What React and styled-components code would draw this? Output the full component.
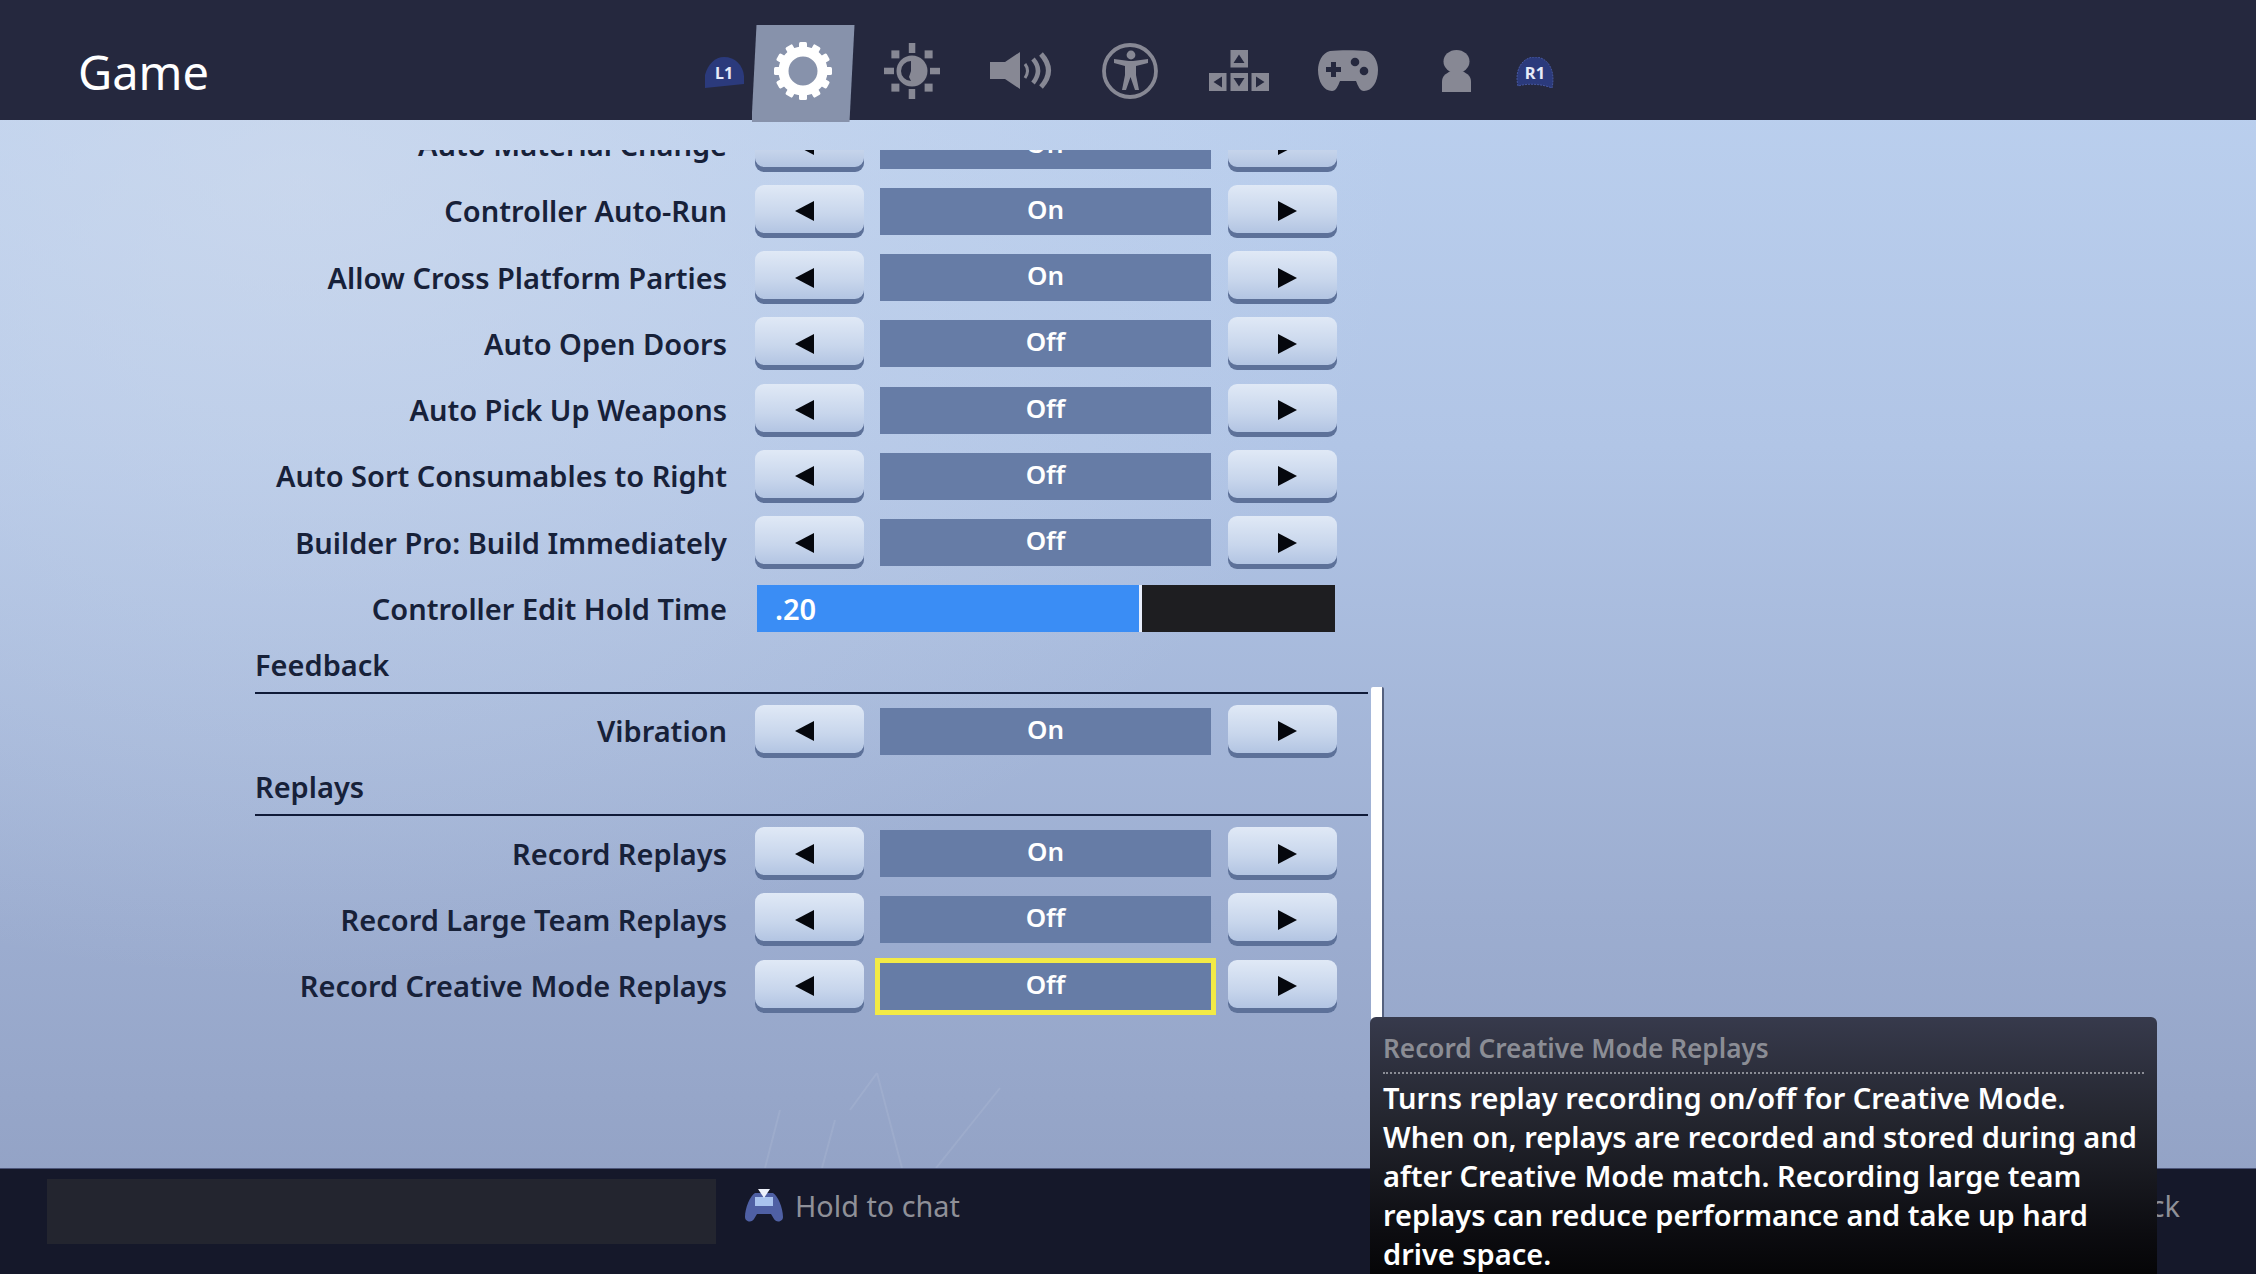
import React from "react";
import styled, { createGlobalStyle } from "styled-components";

const Global = createGlobalStyle`
  html, body { margin: 0; padding: 0; background: #15182a; }
  * { box-sizing: border-box; }
`;

const Page = styled.div`
  position: relative;
  width: 2256px;
  height: 1274px;
  overflow: hidden;
  display: flex;
  flex-direction: column;
  font-family: "Noto Sans", "Open Sans", sans-serif;
  background:
    radial-gradient(ellipse 1100px 800px at 300px 180px, rgba(212,222,238,.6) 0%, rgba(205,218,238,.3) 55%, rgba(195,212,236,0) 100%),
    linear-gradient(180deg, #bdd2f0 0%, #b1c5e6 35%, #9cadd0 72%, #909fc2 100%);
`;

const Stars = styled.svg`
  position: absolute;
  left: 0;
  top: 120px;
  width: 2256px;
  height: 1048px;
  pointer-events: none;
`;

const Header = styled.header`
  position: relative;
  flex: none;
  height: 120px;
  background: #25283e;
  display: flex;
  align-items: stretch;
  padding-left: 78px;
  z-index: 1;
`;

const Title = styled.h1`
  margin: 0;
  width: 627px;
  padding-top: 41px;
  font-size: 47px;
  line-height: 62px;
  font-weight: 400;
  color: #fff;
`;

const Tabs = styled.nav`
  display: flex;
  align-items: stretch;
`;

const Tab = styled.div`
  position: relative;
  width: 109px;
  display: flex;
  align-items: center;
  justify-content: center;
  padding-top: 21px;
  color: ${(p) => (p.$active ? "#fff" : "#878894")};
  &::before {
    content: "";
    display: ${(p) => (p.$active ? "block" : "none")};
    position: absolute;
    left: 3.5px;
    top: 25px;
    width: 103px;
    height: 97px;
    background: #8792ab;
    clip-path: polygon(5px 0, 100% 0, 98px 100%, 0 100%);
  }
  svg { position: relative; }
`;

const Bumper = styled.div`
  width: 43px;
  display: flex;
  align-items: center;
  justify-content: ${(p) => (p.$side === "left" ? "flex-start" : "flex-end")};
  padding-top: 25px;
`;

const Main = styled.main`
  flex: 1;
  min-height: 0;
  padding: 30px 0 0 255px;
`;

const Scroll = styled.div`
  width: 1113px;
  height: 1018px;
  overflow: hidden;
`;

const List = styled.div`
  margin-top: -38px;
`;

const Row = styled.div`
  height: 66.27px;
  display: flex;
  align-items: center;
`;

const Label = styled.div`
  width: 472px;
  margin-right: 28px;
  text-align: right;
  font-size: 29px;
  line-height: 40px;
  font-weight: 600;
  color: #172139;
  white-space: nowrap;
`;

const Stepper = styled.div`
  display: flex;
  align-items: center;
  gap: 16px;
`;

const Arrow = styled.button`
  width: 109px;
  height: 53px;
  margin: 0;
  padding: 0;
  border: 0;
  border-radius: 9px;
  display: flex;
  align-items: center;
  justify-content: center;
  background: linear-gradient(180deg, #e0e9f6 0%, #c8d6ec 55%, #adc0e0 100%);
  box-shadow: inset 0 -5px 0 #5d7199;
`;

const Tri = styled.span`
  display: block;
  width: 0;
  height: 0;
  border-top: 10px solid transparent;
  border-bottom: 10px solid transparent;
  ${(p) =>
    p.$dir === "left"
      ? "border-right: 19px solid #05070d; margin-right: 10px;"
      : "border-left: 19px solid #05070d; margin-left: 9px;"}
`;

const Value = styled.div`
  width: 331px;
  height: 47px;
  margin-right: 1px;
  display: flex;
  align-items: center;
  justify-content: center;
  padding-bottom: 5px;
  background: #667ca6;
  color: #fff;
  font-size: 26px;
  font-weight: 600;
  outline: ${(p) => (p.$focus ? "5px solid #f3ea45" : "none")};
`;

const Slider = styled.div`
  margin-left: 2px;
  width: 578px;
  height: 47px;
  display: flex;
  background: #1e1e21;
`;

const SliderFill = styled.div`
  height: 100%;
  padding-left: 18px;
  display: flex;
  align-items: center;
  background: #3a8df5;
  border-right: 3px solid #e8eefc;
  color: #fff;
  font-size: 29px;
  font-weight: 600;
`;

const Section = styled.div`
  height: 56px;
  padding-bottom: 4px;
  display: flex;
  flex-direction: column;
  justify-content: flex-end;
`;

const SectionTitle = styled.div`
  font-size: 29px;
  line-height: 40px;
  font-weight: 600;
  color: #172139;
  border-bottom: 2px solid #0f1a38;
  height: 49px;
`;

const ScrollThumb = styled.div`
  position: absolute;
  left: 1371px;
  top: 687px;
  width: 13px;
  height: 360px;
  background: #fff;
  border-right: 2px solid #55617f;
  border-radius: 2px 2px 0 0;
`;

const Footer = styled.footer`
  position: relative;
  flex: none;
  height: 106px;
  background: #15182a;
  border-top: 1px solid #4c5578;
  display: flex;
  align-items: flex-start;
  padding: 10px 76px 0 47px;
`;

const ChatBox = styled.div`
  width: 669px;
  height: 65px;
  background: #23252f;
`;

const ChatHint = styled.div`
  margin-left: 29px;
  height: 53px;
  display: flex;
  align-items: center;
  gap: 12px;
  font-size: 28.8px;
  color: #8f9098;
`;

const Back = styled.div`
  margin-left: auto;
  height: 53px;
  display: flex;
  align-items: center;
  font-size: 29px;
  color: #8f9098;
`;

const Tooltip = styled.aside`
  position: absolute;
  left: 1370px;
  top: 1017px;
  width: 787px;
  height: 290px;
  padding: 13px 13px 0;
  border-radius: 6px 6px 0 0;
  background: linear-gradient(180deg, #373a4c 0%, #24262f 35%, #0c0c10 75%, #000 100%);
`;

const TipTitle = styled.div`
  font-size: 26.2px;
  line-height: 36px;
  font-weight: 600;
  color: #8b8d95;
  padding-bottom: 6px;
  border-bottom: 2px dotted #8b8d95;
  margin-bottom: 4px;
`;

const TipBody = styled.div`
  font-size: 29px;
  line-height: 39px;
  font-weight: 600;
  color: #fff;
`;

const Gear = () => (
  <svg width="58" height="58" viewBox="-29 -29 58 58" fill="currentColor">
    {Array.from({ length: 12 }, (_, i) => (
      <rect key={i} x="-4" y="-29" width="8" height="9" rx="1.5" transform={`rotate(${i * 30})`} />
    ))}
    <circle r="19.5" fill="none" stroke="currentColor" strokeWidth="10" />
  </svg>
);

const Sun = () => (
  <svg width="56" height="56" viewBox="-28 -28 56 56" fill="currentColor">
    {[0, 90, 180, 270].map((a) => (
      <rect key={a} x="-3.2" y="-28" width="6.5" height="10" transform={`rotate(${a})`} />
    ))}
    {[45, 135, 225, 315].map((a) => (
      <rect key={a} x="-4" y="-27.5" width="8" height="8" transform={`rotate(${a}) rotate(45 0 -23.5)`} />
    ))}
    <circle r="15.5" />
    <path d="M-1-10 A10 10 0 0 0 -1 10 L-3 6 L-1 0Z" fill="#25283e" />
  </svg>
);

const Speaker = () => (
  <svg width="62" height="37" viewBox="0 0 62 37" fill="none" stroke="currentColor">
    <path d="M0 10H15L30 0V37L15 27H0Z" fill="currentColor" stroke="none" />
    <path d="M35 12Q40 18.5 35 26" strokeWidth="3" />
    <path d="M43 7Q53 18.5 43 31" strokeWidth="4.5" />
    <path d="M51 2Q66 18.5 51 35" strokeWidth="5" />
  </svg>
);

const Access = () => (
  <svg width="56" height="56" viewBox="0 0 56 56" fill="currentColor">
    <circle cx="28" cy="28" r="26" fill="none" stroke="currentColor" strokeWidth="3.8" />
    <circle cx="29" cy="12" r="4.4" />
    <path d="M12 16L27 18H31L46 16V20L34 23V32L37 47H33L28.5 34L24 47H20L23 32V23L12 20Z" />
  </svg>
);

const Dpad = () => (
  <svg width="60" height="41" viewBox="0 0 60 41" fill="currentColor">
    <path fillRule="evenodd" d="M21.5 0H39V17.5H21.5ZM30 4.5L24.5 13H35.5Z" />
    <path fillRule="evenodd" d="M0 23H17.5V41H0ZM4.5 32L13 37.5V26.5Z" />
    <path fillRule="evenodd" d="M21.5 23H39V41H21.5ZM30 36.5L24.5 28H35.5Z" />
    <path fillRule="evenodd" d="M42.5 23H60V41H42.5ZM55.5 32L47 26.5V37.5Z" />
  </svg>
);

const Pad = () => (
  <svg width="60" height="41" viewBox="0 0 60 41">
    <path
      fill="currentColor"
      d="M12 1C20 0 40 0 48 1C56 3 60 12 60 20C60 32 54 41 46 41C42 41 40 36 38 31H22C20 36 18 41 14 41C6 41 0 32 0 20C0 12 4 3 12 1Z"
    />
    <path fill="#25283e" d="M13 12H18V17H23V22H18V27H13V22H8V17H13Z" />
    <circle cx="37" cy="12" r="4.3" fill="#25283e" />
    <circle cx="46" cy="21" r="4.3" fill="#25283e" />
  </svg>
);

const Person = () => (
  <svg width="29" height="42" viewBox="0 0 29 42" fill="currentColor">
    <ellipse cx="14.5" cy="11.5" rx="13" ry="11.5" />
    <path d="M9 21H20C26 24 29 26 29 32V42H0V32C0 26 3 24 9 21Z" />
  </svg>
);

const BumperL = () => (
  <svg width="39" height="31" viewBox="0 0 39 31">
    <path d="M0 18C3 7 10 0 19 0C30 0 38 8 39 19V27L0 31Z" fill="#2b3a7c" />
    <text x="19" y="22" textAnchor="middle" fontFamily="'Noto Sans', sans-serif" fontSize="16" fontWeight="700" fill="#e6ebf8">
      L1
    </text>
  </svg>
);

const BumperR = () => (
  <svg width="38" height="31" viewBox="0 0 38 31">
    <path d="M2 29C-2 12 7 0 19 0C31 0 40 12 36 31C26 27 12 26 2 29Z" fill="#2b3a7c" stroke="#46579f" strokeWidth="1" strokeDasharray="2 1" />
    <text x="19" y="22" textAnchor="middle" fontFamily="'Noto Sans', sans-serif" fontSize="16.5" fontWeight="700" fill="#e6ebf8">
      R1
    </text>
  </svg>
);

const ChatIcon = () => (
  <svg width="38" height="33" viewBox="0 0 38 33">
    <path d="M10 4H28C33 7 38 19 38 28C38 33 31 34 29 30L26 25H12L9 30C7 34 0 33 0 28C0 19 5 7 10 4Z" fill="#4f60a4" />
    <rect x="10" y="8" width="18" height="9" fill="#a9c3ee" />
    <path d="M13 0H25L19 9Z" fill="#eef2fb" />
  </svg>
);

const rows1 = [
  ["Auto Material Change", "Off"],
  ["Controller Auto-Run", "On"],
  ["Allow Cross Platform Parties", "On"],
  ["Auto Open Doors", "Off"],
  ["Auto Pick Up Weapons", "Off"],
  ["Auto Sort Consumables to Right", "Off"],
  ["Builder Pro: Build Immediately", "Off"],
];

const Setting = ({ label, value, focus }) => (
  <Row>
    <Label>{label}</Label>
    <Stepper>
      <Arrow aria-label="Previous"><Tri $dir="left" /></Arrow>
      <Value $focus={focus}>{value}</Value>
      <Arrow aria-label="Next"><Tri $dir="right" /></Arrow>
    </Stepper>
  </Row>
);

export default function App() {
  return (
    <Page>
      <Global />
      <Stars viewBox="0 0 2256 1048" fill="none" stroke="#fff" strokeOpacity=".08">
        <path d="M877 953L902 1048M877 953L850 990M1000 968L936 1048M765 1048L780 990M822 1048L835 1000" strokeWidth="2" />
      </Stars>
      <Header>
        <Title>Game</Title>
        <Tabs>
          <Bumper $side="left"><BumperL /></Bumper>
          <Tab $active><Gear /></Tab>
          <Tab><Sun /></Tab>
          <Tab><Speaker /></Tab>
          <Tab><Access /></Tab>
          <Tab><Dpad /></Tab>
          <Tab><Pad /></Tab>
          <Tab><Person /></Tab>
          <Bumper $side="right"><BumperR /></Bumper>
        </Tabs>
      </Header>
      <Main>
        <Scroll>
          <List>
            {rows1.map(([l, v]) => (
              <Setting key={l} label={l} value={v} />
            ))}
            <Row>
              <Label>Controller Edit Hold Time</Label>
              <Slider>
                <SliderFill style={{ width: `${(385 / 578) * 100}%` }}>.20</SliderFill>
              </Slider>
            </Row>
            <Section><SectionTitle>Feedback</SectionTitle></Section>
            <Setting label="Vibration" value="On" />
            <Section><SectionTitle>Replays</SectionTitle></Section>
            <Setting label="Record Replays" value="On" />
            <Setting label="Record Large Team Replays" value="Off" />
            <Setting label="Record Creative Mode Replays" value="Off" focus />
          </List>
        </Scroll>
      </Main>
      <Footer>
        <ChatBox />
        <ChatHint><ChatIcon />Hold to chat</ChatHint>
        <Back>Back</Back>
      </Footer>
      <ScrollThumb />
      <Tooltip>
        <TipTitle>Record Creative Mode Replays</TipTitle>
        <TipBody>
          Turns replay recording on/off for Creative Mode. When on, replays are recorded and stored during and after Creative Mode match. Recording large team replays can reduce performance and take up hard drive space.
        </TipBody>
      </Tooltip>
    </Page>
  );
}
